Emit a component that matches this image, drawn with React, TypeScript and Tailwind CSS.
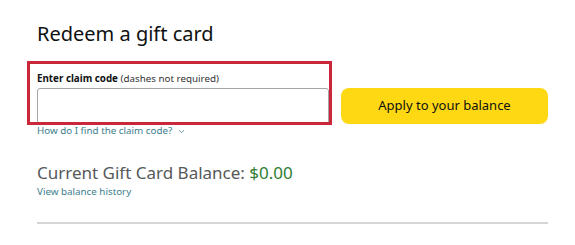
import { ChevronDown } from 'lucide-react';

export default function App() {
  return (
    <div className="min-h-[245px] w-[575px] bg-white font-['Noto_Sans',sans-serif] text-[#0f1111]">
      <div className="w-[511px] pl-[37px] pt-[19px] box-content">
        <h1 className="text-[20px] leading-[30px] font-normal">Redeem a gift card</h1>

        <div className="relative mt-[23px] flex items-end">
          <div className="flex w-[292px] flex-col">
            <label className="text-[9.8px] leading-[14px]">
              <span className="font-bold">Enter claim code</span>{' '}
              <span className="text-[#333]">(dashes not required)</span>
            </label>
            <input
              type="text"
              className="mt-[2px] h-[36px] w-[292px] rounded-[3px] border border-[#a6a6a6] bg-white px-2 outline-none"
            />
          </div>
          <button className="ml-[12px] h-[36px] w-[207px] rounded-[8px] bg-[#ffd814] text-[13px] text-[#0f1111]">
            Apply to your balance
          </button>
          {/* red annotation box */}
          <div className="pointer-events-none absolute left-[-10px] top-[-11px] h-[64px] w-[305px] border-[3px] border-[#c8283a]" />
        </div>

        <div className="flex items-center gap-[5px] text-[9.8px] leading-[14px] text-[#3c7e8c]">
          <span>How do I find the claim code?</span>
          <ChevronDown className="h-[9px] w-[9px]" strokeWidth={2} />
        </div>

        <div className="mt-[23px] text-[17px] leading-[24px] text-[#565959]">
          Current Gift Card Balance: <span className="text-[#2f7d32]">$0.00</span>
        </div>
        <div className="text-[9.8px] leading-[14px] text-[#3c7e8c]">View balance history</div>

        <div className="mt-[23px] h-[2px] w-[511px] bg-[#d5d5d5]" />
      </div>
    </div>
  );
}
